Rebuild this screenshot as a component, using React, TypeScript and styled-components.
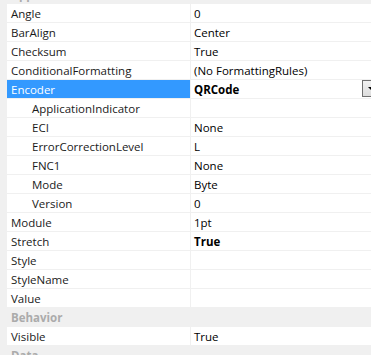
import styled, { createGlobalStyle } from "styled-components";

const GlobalStyle = createGlobalStyle`
  html, body { margin: 0; padding: 0; background: #ffffff; }
  body { font-family: "Segoe UI", "Open Sans", "Noto Sans", sans-serif; font-size: 11.5px; }
`;

const Grid = styled.div`
  width: 371px;
  height: 355px;
  overflow: hidden;
  background: #f0f0f0;
`;

const Inner = styled.div`
  margin-top: -15px;
`;

const Row = styled.div`
  display: flex;
  height: 18px;
  border-bottom: 1px solid #f0f0f0;
  margin-left: 7px;
  background: #ffffff;
`;

const NameCell = styled.div<{ $selected?: boolean; $child?: boolean }>`
  width: 184px;
  flex: none;
  padding-left: ${(p) => (p.$child ? 25 : 4)}px;
  box-sizing: border-box;
  border-right: 1px solid #f0f0f0;
  display: flex;
  align-items: center;
  white-space: nowrap;
  overflow: hidden;
  background: ${(p) => (p.$selected ? "#3399ff" : "#ffffff")};
  color: ${(p) => (p.$selected ? "#ffffff" : "#1a1a1a")};
`;

const ValueCell = styled.div<{ $bold?: boolean }>`
  flex: 1;
  position: relative;
  display: flex;
  align-items: center;
  padding-left: 3px;
  white-space: nowrap;
  color: #000000;
  font-weight: ${(p) => (p.$bold ? 700 : 400)};
`;

const Category = styled.div`
  height: 18px;
  border-bottom: 1px solid #f0f0f0;
  background: #f0f0f0;
  display: flex;
  align-items: center;
  padding-left: 11px;
  color: #ababab;
  font-weight: 700;
`;

const DropButton = styled.div`
  position: absolute;
  left: 171px;
  top: 0;
  width: 17px;
  height: 17px;
  box-sizing: border-box;
  border: 1px solid #707070;
  background: linear-gradient(#f2f2f2, #dcdcdc);
  display: flex;
  align-items: center;
  justify-content: center;
`;

const Arrow = styled.div`
  width: 0;
  height: 0;
  border-left: 3px solid transparent;
  border-right: 3px solid transparent;
  border-top: 3px solid #000000;
`;

type Item =
  | { kind: "cat"; name: string }
  | { kind: "prop"; name: string; value?: string; child?: boolean; bold?: boolean; selected?: boolean; drop?: boolean };

const items: Item[] = [
  { kind: "cat", name: "Appearance" },
  { kind: "prop", name: "Angle", value: "0" },
  { kind: "prop", name: "BarAlign", value: "Center" },
  { kind: "prop", name: "Checksum", value: "True" },
  { kind: "prop", name: "ConditionalFormatting", value: "(No FormattingRules)" },
  { kind: "prop", name: "Encoder", value: "QRCode", bold: true, selected: true, drop: true },
  { kind: "prop", name: "ApplicationIndicator", child: true },
  { kind: "prop", name: "ECI", value: "None", child: true },
  { kind: "prop", name: "ErrorCorrectionLevel", value: "L", child: true },
  { kind: "prop", name: "FNC1", value: "None", child: true },
  { kind: "prop", name: "Mode", value: "Byte", child: true },
  { kind: "prop", name: "Version", value: "0", child: true },
  { kind: "prop", name: "Module", value: "1pt" },
  { kind: "prop", name: "Stretch", value: "True", bold: true },
  { kind: "prop", name: "Style" },
  { kind: "prop", name: "StyleName" },
  { kind: "prop", name: "Value" },
  { kind: "cat", name: "Behavior" },
  { kind: "prop", name: "Visible", value: "True" },
  { kind: "cat", name: "Data" },
];

export default function App() {
  return (
    <>
      <GlobalStyle />
      <Grid>
        <Inner>
          {items.map((it, i) =>
            it.kind === "cat" ? (
              <Category key={i}>{it.name}</Category>
            ) : (
              <Row key={i}>
                <NameCell $selected={it.selected} $child={it.child}>{it.name}</NameCell>
                <ValueCell $bold={it.bold}>
                  {it.value}
                  {it.drop && (
                    <DropButton>
                      <Arrow />
                    </DropButton>
                  )}
                </ValueCell>
              </Row>
            )
          )}
        </Inner>
      </Grid>
    </>
  );
}
